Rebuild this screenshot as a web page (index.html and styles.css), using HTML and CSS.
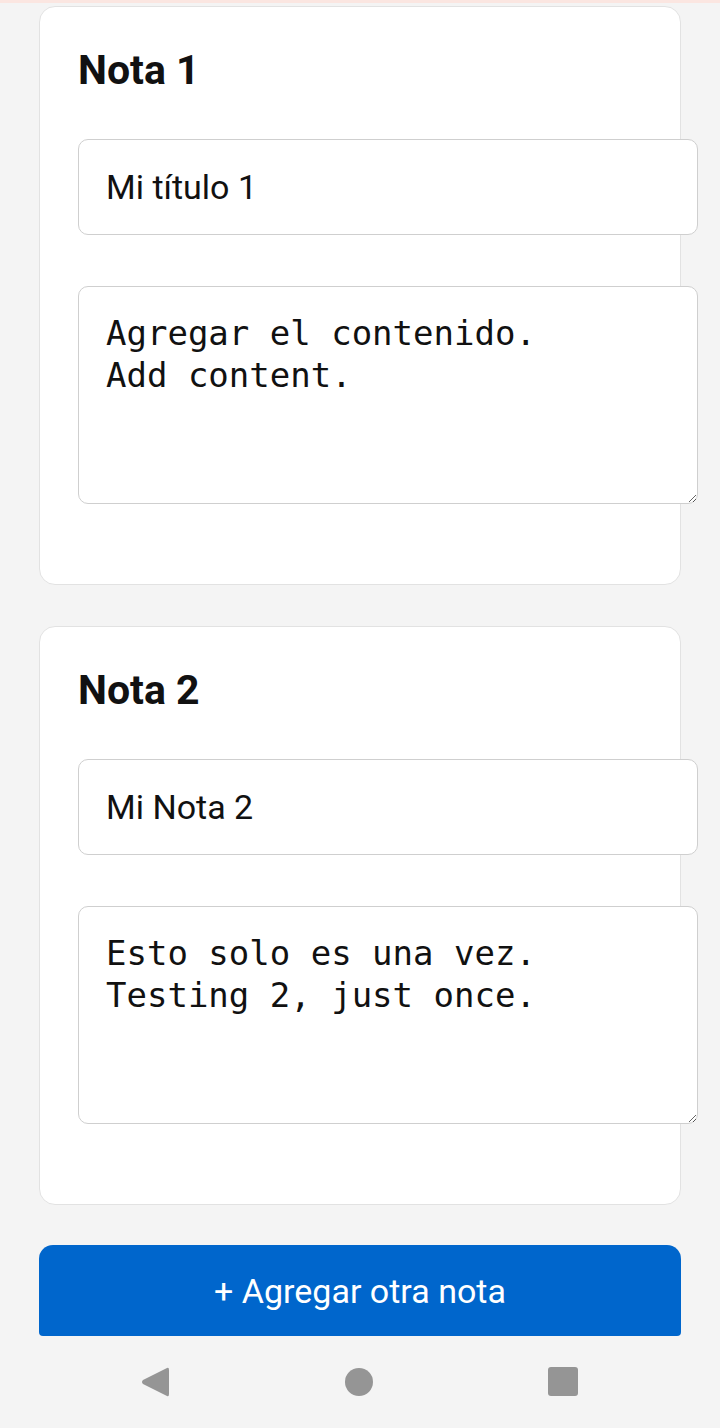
FILE: index.html
```html
<!DOCTYPE html>
<html lang="es">
<head>
<meta charset="utf-8">
<title>Notas</title>
<link rel="stylesheet" href="styles.css">
</head>
<body>
<div class="top-strip"></div>
<main class="page">
  <section class="card">
    <h2 class="card-title">Nota 1</h2>
    <input class="field" type="text" value="Mi título 1">
    <textarea class="area">Agregar el contenido.
Add content.</textarea>
  </section>
  <section class="card">
    <h2 class="card-title">Nota 2</h2>
    <input class="field" type="text" value="Mi Nota 2">
    <textarea class="area">Esto solo es una vez.
Testing 2, just once.</textarea>
  </section>
  <button class="add-btn" type="button">+ Agregar otra nota</button>
</main>
<nav class="navbar">
  <svg class="nav-icon" width="30" height="32" viewBox="0 0 30 32"><path d="M27 2 Q29 1 29 4 L29 28 Q29 31 27 30 L3 18 Q1 16 3 14 Z" fill="#959595"/></svg>
  <svg class="nav-icon" width="30" height="30" viewBox="0 0 30 30"><circle cx="15" cy="15" r="14" fill="#959595"/></svg>
  <svg class="nav-icon" width="30" height="30" viewBox="0 0 30 30"><rect x="0" y="0" width="30" height="29" rx="3" fill="#959595"/></svg>
</nav>
</body>
</html>
```
FILE: styles.css
```css
html, body {
  margin: 0;
  padding: 0;
}
body {
  background: #f4f4f4;
  font-family: Roboto, "Liberation Sans", sans-serif;
  color: #111;
  width: 720px;
  height: 1428px;
  overflow: hidden;
}
.top-strip {
  height: 3px;
  background: #fbe6e1;
}
.page {
  padding: 3px 39px 0;
  display: flex;
  flex-direction: column;
  gap: 41px;
}
.card {
  background: #fff;
  border: 1px solid #e2e2e2;
  border-radius: 16px;
  padding: 40px 38px;
}
.card-title {
  margin: 0 0 45px;
  font-size: 41px;
  font-weight: 700;
  line-height: 47px;
  color: #111;
}
.field {
  display: block;
  box-sizing: content-box;
  width: 100%;
  height: 42px;
  padding: 26px 27px;
  margin: 0;
  border: 1px solid #cfcfcf;
  border-radius: 10px;
  background: #fff;
  font-family: Roboto, "Liberation Sans", sans-serif;
  font-size: 34px;
  color: #111;
  outline: none;
}
.area {
  display: block;
  box-sizing: content-box;
  width: 100%;
  height: 166px;
  padding: 25px 27px;
  margin: 51px 0 40px;
  border: 1px solid #cfcfcf;
  border-radius: 10px;
  background: #fff;
  font-family: "DejaVu Sans Mono", monospace;
  font-size: 34px;
  line-height: 42px;
  color: #111;
  outline: none;
}
.add-btn {
  display: block;
  width: 100%;
  height: 91px;
  margin-top: -1px;
  border: none;
  border-radius: 14px 14px 4px 4px;
  background: #0066cc;
  color: #fff;
  font-family: Roboto, "Liberation Sans", sans-serif;
  font-size: 34px;
  cursor: pointer;
}
.navbar {
  height: 92px;
  display: flex;
  align-items: center;
  justify-content: space-between;
  padding: 0 142px 0 140px;
  background: #f4f4f4;
}
.nav-icon {
  display: block;
}
```
